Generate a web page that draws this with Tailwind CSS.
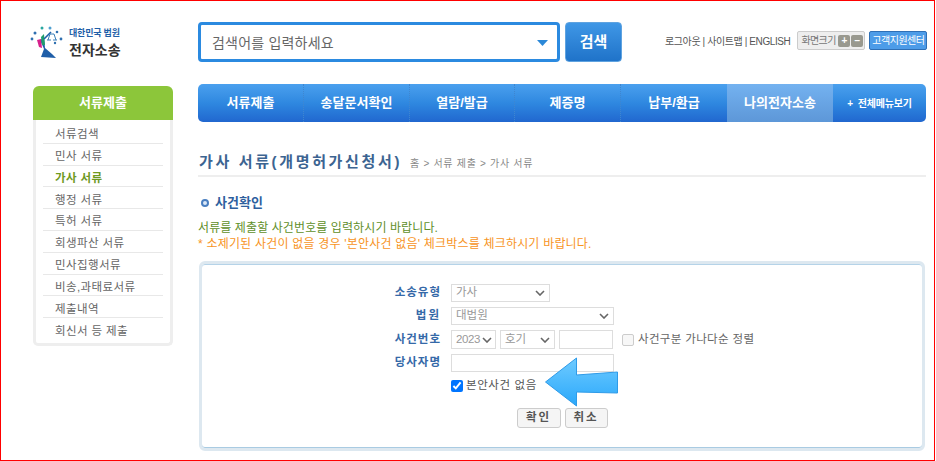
<!DOCTYPE html>
<html lang="ko">
<head>
<meta charset="utf-8">
<script src="https://cdn.jsdelivr.net/npm/@tailwindcss/browser@4"></script>
</head>
<body class="bg-white">
<div class="relative w-[935px] h-[461px] overflow-hidden border border-[#ff0000] bg-white font-['Liberation_Sans','Noto_Sans_CJK_KR',sans-serif] text-[#666]">
  <header class="flex items-start h-[83px] pt-[21px]">
    <div class="w-[197px] pl-[29px] pt-[4px] flex gap-[5px]">
      <svg width="34" height="33" viewBox="0 0 34 33">
        <g fill="#2f6fb0"><circle cx="2" cy="13" r="1.4"/><circle cx="5" cy="7" r="1.5"/><circle cx="27" cy="6" r="1.3"/><circle cx="31" cy="13" r="1.4"/><circle cx="25" cy="17" r="1.2"/></g>
        <circle cx="12" cy="2" r="1.5" fill="#2aa7a0"/><circle cx="20" cy="2" r="1.5" fill="#4f9fd0"/>
        <path d="M10 14 L14 12 L15 22 L22 28 L26 32 L11 31 L14 23 Z" fill="#1f5ea8"/>
        <path d="M7 14 L11 13 L12 22 L9 21 Z" fill="#d6208c"/>
        <path d="M11 11 L14 8 L15 19 L12 19 Z" fill="#1f9e6d"/>
        <path d="M14 13 L21 6" stroke="#1f5ea8" stroke-width="1.6" fill="none"/>
        <path d="M18 14 L20 8 L24 8 L26 14 M17 14 h4 M23 14 h4" stroke="#3b7fb8" stroke-width="1" fill="none"/>
      </svg>
      <div class="leading-none">
        <div class="text-[9px] font-bold text-[#1f5fa8] mt-[3px] whitespace-nowrap tracking-[-0.2px]">대한민국 법원</div>
        <div class="text-[14px] font-bold text-[#333] mt-[5px] whitespace-nowrap">전자소송</div>
      </div>
    </div>
    <div class="relative flex items-center w-[362px] h-[40px] border-[3px] border-[#2b8ae0] rounded-[4px] pl-[11px] pt-[3px] text-[14px] tracking-[0.2px] text-[#666]">
      검색어를 입력하세요
      <svg class="absolute right-[9px] top-[15px]" width="11" height="6" viewBox="0 0 11 6"><path d="M0 0H11L5.5 6Z" fill="#2b88d8"/></svg>
    </div>
    <div class="ml-[5px] flex items-center justify-center w-[57px] h-[40px] rounded-[4px] border border-[#5fa3e0] bg-gradient-to-b from-[#3f97e6] to-[#1f73c9] text-white font-bold text-[15px]">검색</div>
    <div class="flex items-center h-[19px] mt-[9px] ml-[43px] whitespace-nowrap">
      <span class="text-[10px] text-[#555] tracking-[-0.4px] pt-[2px]">로그아웃 | 사이트맵 | ENGLISH</span>
      <div class="ml-[7px] flex items-center w-[68px] h-[19px] pl-[3px] gap-[1px] border border-[#ccc] rounded-[2px] bg-[#eee] text-[10px] text-[#777]">
        <span class="w-[36px] tracking-[-0.6px]">화면크기</span>
        <span class="flex items-center justify-center w-[12px] h-[12px] rounded-[2px] bg-[#99998f] text-white font-bold">+</span>
        <span class="flex items-center justify-center w-[12px] h-[12px] rounded-[2px] bg-[#99998f] text-white font-bold">−</span>
      </div>
      <div class="ml-[4px] flex items-center justify-center w-[58px] h-[19px] rounded-[2px] border border-[#2f6fb5] bg-[#4d9ce8] text-white text-[10px] tracking-[-0.5px]">고객지원센터</div>
    </div>
  </header>
  <div class="flex items-start">
    <aside class="w-[197px] pl-[32px] pt-[2px]">
      <div class="w-[140px]">
        <div class="flex items-center justify-center h-[34px] rounded-t-[6px] bg-[#8cc63a] text-white font-bold text-[13px]">서류제출</div>
        <ul class="h-[226px] px-[7px] pt-[2px] border-[3px] border-t-0 border-[#eeeeee] rounded-b-[5px] text-[11.5px] text-[#666] tracking-[0.4px]">
          <li class="flex items-center h-[21.8px] pl-[12px] pt-[5px] border-b border-[#e8e8e8]">서류검색</li>
          <li class="flex items-center h-[21.8px] pl-[12px] pt-[5px] border-b border-[#e8e8e8]">민사 서류</li>
          <li class="flex items-center h-[21.8px] pl-[12px] pt-[5px] border-b border-[#e8e8e8] font-bold text-[#6f9a1f]">가사 서류</li>
          <li class="flex items-center h-[21.8px] pl-[12px] pt-[5px] border-b border-[#e8e8e8]">행정 서류</li>
          <li class="flex items-center h-[21.8px] pl-[12px] pt-[5px] border-b border-[#e8e8e8]">특허 서류</li>
          <li class="flex items-center h-[21.8px] pl-[12px] pt-[5px] border-b border-[#e8e8e8]">회생파산 서류</li>
          <li class="flex items-center h-[21.8px] pl-[12px] pt-[5px] border-b border-[#e8e8e8]">민사집행서류</li>
          <li class="flex items-center h-[21.8px] pl-[12px] pt-[5px] border-b border-[#e8e8e8]">비송,과태료서류</li>
          <li class="flex items-center h-[21.8px] pl-[12px] pt-[5px] border-b border-[#e8e8e8]">제출내역</li>
          <li class="flex items-center h-[21.8px] pl-[12px] pt-[5px]">회신서 등 제출</li>
        </ul>
      </div>
    </aside>
    <main class="w-[728px]">
      <nav class="flex h-[38px] rounded-[5px] overflow-hidden bg-gradient-to-b from-[#4aa0ee] via-[#2f88e0] to-[#2167cf] text-white font-bold text-[13px]">
        <a class="flex items-center justify-center w-[106px] border-r border-dotted border-[#3f86cf]">서류제출</a>
        <a class="flex items-center justify-center w-[106px] border-r border-dotted border-[#3f86cf]">송달문서확인</a>
        <a class="flex items-center justify-center w-[105px] border-r border-dotted border-[#3f86cf]">열람/발급</a>
        <a class="flex items-center justify-center w-[106px] border-r border-dotted border-[#3f86cf]">제증명</a>
        <a class="flex items-center justify-center w-[106px]">납부/환급</a>
        <a class="flex items-center justify-center w-[106px] bg-gradient-to-b from-[#74b2f0] to-[#5d97d8]">나의전자소송</a>
        <a class="flex items-center justify-center flex-1 text-[10px] gap-[5px] tracking-[-0.2px]"><span>+</span><span>전체메뉴보기</span></a>
      </nav>
      <div class="flex items-baseline h-[55px] pt-[29px] pl-[1px] border-b-2 border-[#eeeeee] whitespace-nowrap">
        <h1 class="text-[15px] font-bold text-[#3c6491] tracking-[2.65px]">가사 서류(개명허가신청서)</h1>
        <span class="ml-[8px] text-[10px] text-[#888] tracking-[0.7px]">홈 &gt; 서류 제출 &gt; 가사 서류</span>
      </div>
      <div class="flex items-center gap-[6px] mt-[17px] pl-[3px] h-[18px]">
        <span class="w-[8px] h-[8px] rounded-full border-[2px] border-[#4a7fc0] bg-[#dbe8f7]"></span>
        <h2 class="text-[13px] font-bold text-[#2e5f9e]">사건확인</h2>
      </div>
      <p class="mt-[8px] text-[12px] leading-[16px] text-[#5f8f2a] whitespace-nowrap tracking-[0.1px]">서류를 제출할 사건번호를 입력하시기 바랍니다.</p>
      <p class="text-[12px] leading-[16px] text-[#f7941e] whitespace-nowrap tracking-[0.2px]">* 소제기된 사건이 없을 경우 '본안사건 없음' 체크박스를 체크하시기 바랍니다.</p>
      <section class="relative ml-[1px] mt-[9px] w-[726px] h-[190px] rounded-[6px] border-[3px] border-[#dde8f0] shadow-[inset_0_1px_0_#b5d3e8,inset_0_-1px_0_#a9cbe2] pt-[20px] text-[11.5px]">
        <form class="grid grid-cols-[239px_1fr] gap-x-[10px] gap-y-[5px] items-center">
          <label class="text-right font-bold text-[#3569a8] tracking-[1px]">소송유형</label>
          <div class="flex items-center justify-between w-[99px] h-[18px] pl-[4px] pr-[4px] border border-[#ddd] text-[#999]">가사<svg width="10" height="6" viewBox="0 0 10 6"><path d="M1 1L5 5L9 1" stroke="#666" stroke-width="1.6" fill="none"/></svg></div>
          <label class="text-right font-bold text-[#3569a8] tracking-[2px]">법원</label>
          <div class="flex items-center justify-between w-[163px] h-[18px] pl-[4px] pr-[4px] border border-[#ddd] text-[#999]">대법원<svg width="10" height="6" viewBox="0 0 10 6"><path d="M1 1L5 5L9 1" stroke="#666" stroke-width="1.6" fill="none"/></svg></div>
          <label class="text-right font-bold text-[#3569a8] tracking-[1px]">사건번호</label>
          <div class="flex items-center whitespace-nowrap">
            <div class="flex items-center justify-between w-[45px] h-[19px] pl-[4px] pr-[3px] border border-[#ddd] text-[#999] tracking-[-0.4px]">2023<svg width="10" height="6" viewBox="0 0 10 6"><path d="M1 1L5 5L9 1" stroke="#666" stroke-width="1.6" fill="none"/></svg></div>
            <div class="flex items-center justify-between w-[55px] h-[19px] ml-[4px] pl-[4px] pr-[4px] border border-[#ddd] text-[#999]">호기<svg width="10" height="6" viewBox="0 0 10 6"><path d="M1 1L5 5L9 1" stroke="#666" stroke-width="1.6" fill="none"/></svg></div>
            <div class="w-[54px] h-[19px] ml-[4px] border border-[#ddd]"></div>
            <input type="checkbox" class="ml-[9px] w-[12px] h-[12px] appearance-none border border-[#ccc] rounded-[2px] bg-[#f7f7f7]">
            <span class="ml-[4px] text-[#666] tracking-[0.35px]">사건구분 가나다순 정렬</span>
          </div>
          <label class="text-right font-bold text-[#3569a8] tracking-[1px]">당사자명</label>
          <div class="w-[163px] h-[18px] border border-[#ddd]"></div>
          <div></div>
          <label class="flex items-center gap-[3px] text-[#555] h-[18px] tracking-[0.6px]"><input type="checkbox" checked class="w-[12px] h-[12px] m-0 accent-[#0075ff]">본안사건 없음</label>
        </form>
        <div class="flex justify-center gap-[4px] mt-[13px]">
          <button class="w-[44px] h-[20px] rounded-[3px] border border-[#ccc] bg-[#f5f5f5] text-[11.5px] font-bold text-[#555] tracking-[2px]">확인</button>
          <button class="w-[43px] h-[20px] rounded-[3px] border border-[#ccc] bg-[#f5f5f5] text-[11.5px] font-bold text-[#555] tracking-[2px]">취소</button>
        </div>
        <svg class="absolute left-[343px] top-[93px]" width="74" height="50" viewBox="0 0 74 50">
          <defs><linearGradient id="a" x1="0" y1="0" x2="0" y2="1"><stop offset="0" stop-color="#6fcbff"/><stop offset="1" stop-color="#2aa8fb"/></linearGradient></defs>
          <path d="M0.5 25 L31.5 1 L31.5 18 L72.5 15 L72.5 36 L31.5 35 L31.5 49 Z" fill="url(#a)" stroke="#2f9be8" stroke-width="1"/>
        </svg>
      </section>
    </main>
  </div>
</div>
</body>
</html>
